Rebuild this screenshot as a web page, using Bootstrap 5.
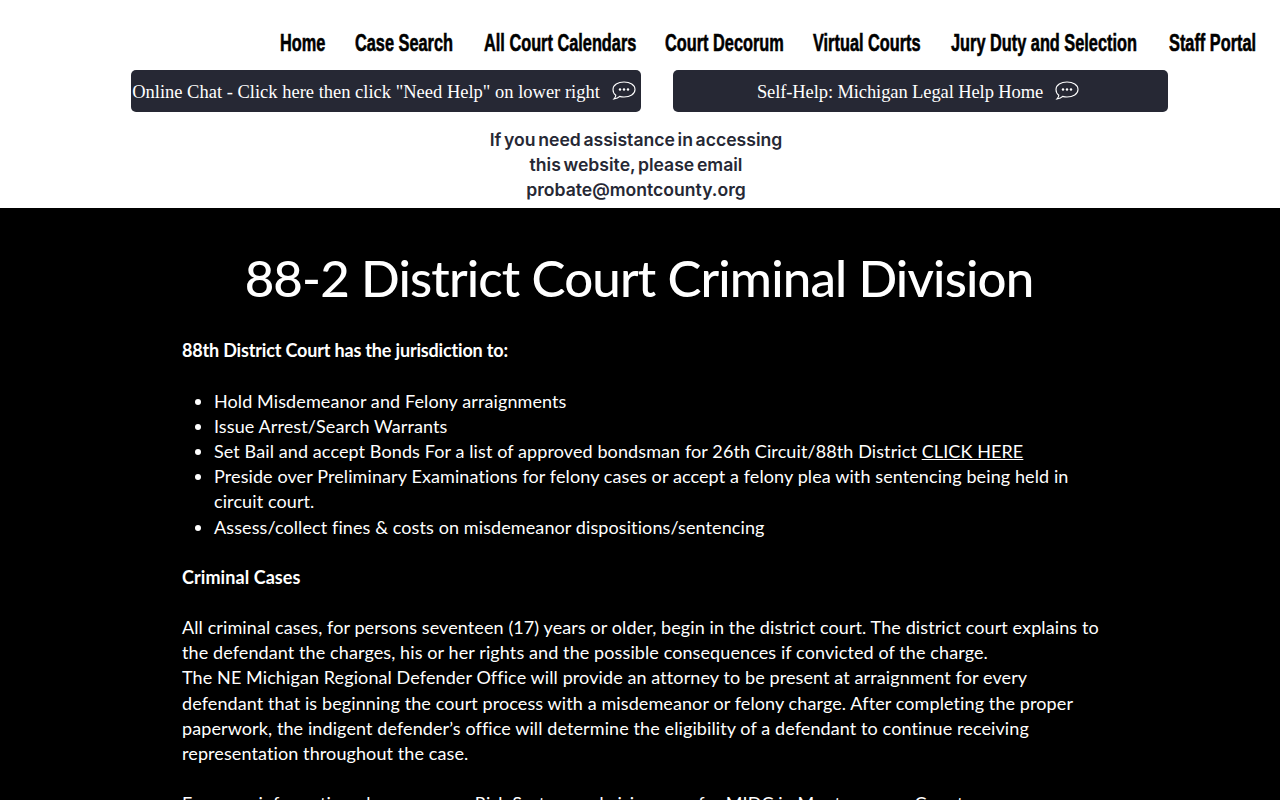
<!DOCTYPE html>
<html lang="en">
<head>
<meta charset="utf-8">
<title>88-2 District Court Criminal Division</title>
<link href="https://cdn.jsdelivr.net/npm/bootstrap@5.3.0/dist/css/bootstrap.min.css" rel="stylesheet">
<style>
html,body{overflow:hidden;height:800px}
body{font-family:"Lato","Liberation Sans",sans-serif;background:#fff}
.site-head{height:208px}
.top-nav{height:70px;padding:0 23px 0 0;gap:30px}
.top-nav a{display:block;font-family:"Liberation Sans",sans-serif;font-weight:700;font-size:24px;color:#000;text-decoration:none;line-height:1;padding-top:16px;white-space:nowrap;transform-origin:0 50%;transform:scaleX(.68);-webkit-text-stroke:.6px #000}
.top-nav a:nth-child(1){width:45px}
.top-nav a:nth-child(2){width:99px}
.top-nav a:nth-child(3){width:151px}
.top-nav a:nth-child(4){width:118px}
.top-nav a:nth-child(5){width:108px}
.top-nav a:nth-child(6){width:188px}
.top-nav a:nth-child(7){width:88px}
.cta-row{padding-left:131px;gap:32px}
.cta{height:42px;background:#262834;border-radius:5px;color:#fff;font-family:"Liberation Serif",serif;font-size:18.5px;text-decoration:none;gap:12px;white-space:nowrap;padding-top:3px}
.cta svg{flex-shrink:0;margin-top:-4px}
.cta-a{width:510px;padding-right:4px}
.cta-b{width:495px;padding-right:5px;letter-spacing:-.1px}
.help{font-family:"Inter",sans-serif;font-weight:600;font-size:17.6px;word-spacing:-1.8px;line-height:25px;color:#262834;width:320px;margin:15px 0 0 476px}
.main-band{background:#000;color:#fff;height:592px;overflow:hidden}
.main-title{font-family:"Lato",sans-serif;font-weight:500;font-size:51px;letter-spacing:-.85px;line-height:60px;padding-top:40px;margin:0 2px 30.3px 0}
.body-copy{margin:0 0 0 182px;width:920px;font-size:18px;letter-spacing:.1px;line-height:25.2px;font-weight:400}
.body-copy ul{padding-left:32px;margin:0}
.body-copy b{font-weight:700;letter-spacing:-.17px}
.body-copy b.cases-head{letter-spacing:.08px}
.body-copy a{color:#fff}
.gap-line{height:25px}
</style>
</head>
<body>
<header class="site-head">
<nav class="top-nav d-flex justify-content-end align-items-center">
<a href="#">Home</a><a href="#">Case Search</a><a href="#">All Court Calendars</a><a href="#">Court Decorum</a><a href="#">Virtual Courts</a><a href="#">Jury Duty and Selection</a><a href="#">Staff Portal</a>
</nav>
<div class="cta-row d-flex">
<a class="cta cta-a d-flex align-items-center justify-content-center" href="#">Online Chat - Click here then click "Need Help" on lower right
<svg width="24" height="19" viewBox="0 0 24 19" fill="none" stroke="#fff" stroke-width="1.1"><path d="M12 1c6 0 11 3 11 7.500S18 16 12 16c-1.500 0-3-.2-4.300-.6C6.500 16.800 4.500 17.700 2 18c1-1 1.700-2.300 1.800-3.700C2 13 1 10.800 1 8.500 1 4 6 1 12 1z"/><circle cx="8" cy="8.500" r="1.200" fill="#fff" stroke="none"/><circle cx="12" cy="8.500" r="1.200" fill="#fff" stroke="none"/><circle cx="16" cy="8.500" r="1.200" fill="#fff" stroke="none"/></svg></a>
<a class="cta cta-b d-flex align-items-center justify-content-center" href="#">Self-Help: Michigan Legal Help Home
<svg width="24" height="19" viewBox="0 0 24 19" fill="none" stroke="#fff" stroke-width="1.1"><path d="M12 1c6 0 11 3 11 7.500S18 16 12 16c-1.500 0-3-.2-4.300-.6C6.500 16.800 4.500 17.700 2 18c1-1 1.700-2.300 1.800-3.700C2 13 1 10.800 1 8.500 1 4 6 1 12 1z"/><circle cx="8" cy="8.500" r="1.200" fill="#fff" stroke="none"/><circle cx="12" cy="8.500" r="1.200" fill="#fff" stroke="none"/><circle cx="16" cy="8.500" r="1.200" fill="#fff" stroke="none"/></svg></a>
</div>
<p class="help text-center">If you need assistance in accessing<br>this website, please email<br>probate@montcounty.org</p>
</header>
<main class="main-band">
<h1 class="main-title text-center">88-2 District Court Criminal Division</h1>
<div class="body-copy">
<div><b>88th District Court has the jurisdiction to:</b></div>
<div class="gap-line"></div>
<ul>
<li>Hold Misdemeanor and Felony arraignments</li>
<li>Issue Arrest/Search Warrants</li>
<li>Set Bail and accept Bonds For a list of approved bondsman for 26th Circuit/88th District <a href="#">CLICK HERE</a></li>
<li>Preside over Preliminary Examinations for felony cases or accept a felony plea with sentencing being held in circuit court.</li>
<li>Assess/collect fines &amp; costs on misdemeanor dispositions/sentencing</li>
</ul>
<div class="gap-line"></div>
<div><b class="cases-head">Criminal Cases</b></div>
<div class="gap-line"></div>
<div>All criminal cases, for persons seventeen (17) years or older, begin in the district court. The district court explains to the defendant the charges, his or her rights and the possible consequences if convicted of the charge.</div>
<div>The NE Michigan Regional Defender Office will provide an attorney to be present at arraignment for every defendant that is beginning the court process with a misdemeanor or felony charge. After completing the proper paperwork, the indigent defender’s office will determine the eligibility of a defendant to continue receiving representation throughout the case.</div>
<div class="gap-line"></div>
<div>For more information please see our Risk System and vision zero for MIDC in Montmorency County</div>
</div>
</main>
<script src="https://cdn.jsdelivr.net/npm/bootstrap@5.3.0/dist/js/bootstrap.bundle.min.js"></script>
</body>
</html>
